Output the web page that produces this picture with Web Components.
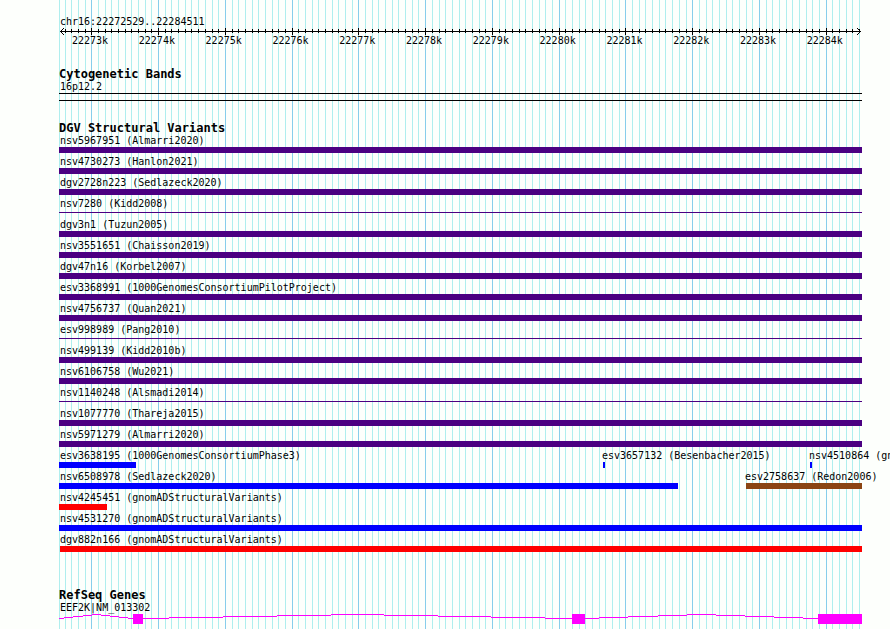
<!DOCTYPE html>
<html lang="en">
<head>
<meta charset="utf-8">
<title>chr16:22272529..22284511</title>
<style>
html { background: #fdfffc; }
body { margin: 0; min-height: 100vh; display: grid; overflow: hidden; color: #000;
  font: 10px/12px "DejaVu Sans Mono", "Liberation Mono", monospace; }
</style>
</head>
<body>
<genome-browser>
  <genome-ruler start="22272529" end="22284511" chrom="chr16"></genome-ruler>
  <genome-track heading="Cytogenetic Bands"><cyto-band>16p12.2</cyto-band></genome-track>
  <genome-track id="variants" heading="DGV Structural Variants"></genome-track>
  <genome-track class="last" heading="RefSeq Genes"><gene-model>EEF2K|NM_013302</gene-model></genome-track>
</genome-browser>

<script>
const SPAN = 803;

class Base extends HTMLElement {
  constructor() { super(); this.attachShadow({ mode: 'open' }); }
}

customElements.define('genome-grid', class extends Base {
  connectedCallback() {
    const first = 22272529, perBase = 800 / 11983;
    let minor = '', major = '';
    for (let p = 22272500; p <= 22284500; p += 100) {
      const x = Math.max(0, Math.round(0.9 + (p - first) * perBase));
      const d = `M${x} 0h1v1h-1z`;
      if (p % 1000 === 0) major += d; else minor += d;
    }
    this.shadowRoot.innerHTML = `<style>
      :host { display: block; }
      svg { display: block; width: 100%; height: 100%; }
    </style>
    <svg viewBox="0 0 ${SPAN} 1" preserveAspectRatio="none" shape-rendering="crispEdges" aria-hidden="true">
      <path fill="#afeeee" d="${minor}"/><path fill="#87ceeb" d="${major}"/></svg>`;
  }
});

customElements.define('genome-browser', class extends Base {
  connectedCallback() {
    this.shadowRoot.innerHTML = `<style>
      :host { display: block; position: relative; padding: 16px 28px 5px 59px; }
      genome-grid { position: absolute; inset: 0 28px 0 59px; }
      main { position: relative; display: flex; flex-direction: column; gap: 20px; }
    </style><genome-grid></genome-grid><main><slot></slot></main>`;
  }
});

customElements.define('genome-ruler', class extends Base {
  connectedCallback() {
    const start = +this.getAttribute('start'), end = +this.getAttribute('end');
    let ticks = '', labels = '';
    for (let p = Math.ceil(start / 100) * 100; p <= end; p += 100) {
      const x = Math.round(0.9 + (p - start) * 800 / (end - start + 1));
      const isMajor = p % 1000 === 0;
      ticks += isMajor ? `M${x} 0h1v7h-1z` : `M${x} 1h1v4h-1z`;
      if (isMajor) labels += `<span>${p / 1000}k</span>`;
    }
    this.shadowRoot.innerHTML = `<style>
      :host { display: block; }
      h1 { margin: 0; padding-left: 1px; font: inherit; }
      svg { display: block; width: 100%; height: 7px; }
      div { display: flex; justify-content: space-between; padding: 0 19px 0 13px; }
    </style>
    <h1>${this.getAttribute('chrom')}:${start}..${end}</h1>
    <svg viewBox="0 0 ${SPAN} 7" preserveAspectRatio="none" shape-rendering="crispEdges" aria-hidden="true">
      <path d="M1 3h801v1h-801z${ticks}
        M2 2h1v3h-1zM3 1h1v1h-1zM3 5h1v1h-1zM4 0h1v1h-1zM4 6h1v1h-1z
        M800 2h1v3h-1zM799 1h1v1h-1zM799 5h1v1h-1zM798 0h1v1h-1zM798 6h1v1h-1z"/></svg>
    <div>${labels}</div>`;
  }
});

customElements.define('genome-track', class extends Base {
  connectedCallback() {
    this.shadowRoot.innerHTML = `<style>
      :host { display: block; }
      :host(.last) { margin-top: 13px; }
      h2 { margin: 0; font-size: 12px; line-height: 14px; font-weight: bold; }
    </style><h2>${this.getAttribute('heading')}</h2><slot></slot>`;
  }
});

customElements.define('cyto-band', class extends Base {
  connectedCallback() {
    this.shadowRoot.innerHTML = `<style>
      :host { display: block; }
      span { display: block; padding-left: 1px; }
      div { height: 6px; border: solid #000; border-width: 1px 0; }
    </style><span><slot></slot></span><div></div>`;
  }
});

customElements.define('variant-row', class extends Base {
  connectedCallback() {
    this.shadowRoot.innerHTML = `<style>
      :host { display: grid; height: 21px; }
      ::slotted(*) { grid-area: 1 / 1; }
    </style><slot></slot>`;
  }
});

customElements.define('variant-feature', class extends Base {
  connectedCallback() {
    const from = +this.getAttribute('from'), to = +this.getAttribute('to');
    const pct = n => `calc(100% * ${n} / ${SPAN})`;
    this.shadowRoot.innerHTML = `<style>
      :host { display: block; min-width: 0; }
      span { display: block; white-space: nowrap; width: 0; margin-left: ${pct(from > 1 ? from - 1 : 1)}; }
      div { height: 6px; margin-left: ${pct(from)}; width: ${pct(to - from)}; background: ${this.getAttribute('color')}; }
      :host([thin]) div { height: 1px; margin-top: 2px; }
    </style><span><slot></slot></span><div></div>`;
  }
});

customElements.define('gene-model', class extends Base {
  connectedCallback() {
    const intron = [[0,4],[5,3],[14,2],[24,1],[33,0],[42,1],[51,2],[60,3],[69,4],[110,3],[164,2],[218,1],
      [272,0],[325,1],[379,2],[432,3],[486,4],[540,3],[569,2],[599,1],[628,0],[657,1],[686,2],[715,3],[744,4],[759,4]];
    let d = 'M74 0h10v10h-10zM513 0h13v10h-13zM759 0h44v10h-44z';
    for (let i = 0; i < intron.length - 1; i++) {
      const [x, y] = intron[i], w = intron[i + 1][0] - x;
      d += `M${x} ${y}h${w}v1h${-w}z`;
    }
    this.shadowRoot.innerHTML = `<style>
      :host { display: block; }
      span { display: block; padding-left: 1px; }
      svg { display: block; width: 100%; height: 10px; }
    </style><span><slot></slot></span>
    <svg viewBox="0 0 ${SPAN} 10" preserveAspectRatio="none" shape-rendering="crispEdges" aria-hidden="true">
      <path fill="#f0f" d="${d}"/></svg>`;
  }
});

const both = 'indigo', gain = 'blue', loss = 'red', other = '#8b4513';
const full = (name, thin) => [[name, 0, SPAN, both, thin]];
const rows = [
  full('nsv5967951 (Almarri2020)'),
  full('nsv4730273 (Hanlon2021)'),
  full('dgv2728n223 (Sedlazeck2020)'),
  full('nsv7280 (Kidd2008)', true),
  full('dgv3n1 (Tuzun2005)'),
  full('nsv3551651 (Chaisson2019)'),
  full('dgv47n16 (Korbel2007)'),
  full('esv3368991 (1000GenomesConsortiumPilotProject)'),
  full('nsv4756737 (Quan2021)'),
  full('esv998989 (Pang2010)', true),
  full('nsv499139 (Kidd2010b)'),
  full('nsv6106758 (Wu2021)'),
  full('nsv1140248 (Alsmadi2014)', true),
  full('nsv1077770 (Thareja2015)'),
  full('nsv5971279 (Almarri2020)'),
  [['esv3638195 (1000GenomesConsortiumPhase3)', 0, 77, gain],
   ['esv3657132 (Besenbacher2015)', 544, 546, gain],
   ['nsv4510864 (gnomADStructuralVariants)', 751, 753, gain]],
  [['nsv6508978 (Sedlazeck2020)', 0, 619, gain], ['esv2758637 (Redon2006)', 687, SPAN, other]],
  [['nsv4245451 (gnomADStructuralVariants)', 0, 48, loss]],
  [['nsv4531270 (gnomADStructuralVariants)', 0, SPAN, gain]],
  [['dgv882n166 (gnomADStructuralVariants)', 1, SPAN, loss]],
];
document.getElementById('variants').innerHTML = rows.map(r => '<variant-row>' + r.map(([name, a, b, c, thin]) =>
  `<variant-feature from="${a}" to="${b}" color="${c}"${thin ? ' thin' : ''}>${name}</variant-feature>`).join('') + '</variant-row>').join('');
</script>
</body>
</html>
